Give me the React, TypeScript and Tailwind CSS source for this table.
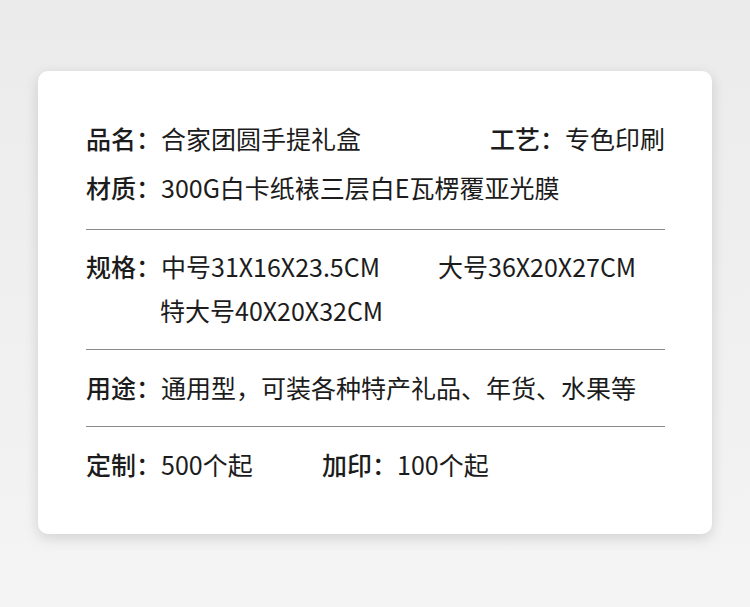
import React from "react";

const Row = ({ children, className = "" }: { children: React.ReactNode; className?: string }) => (
  <div className={`flex h-[44px] items-center whitespace-nowrap ${className}`}>{children}</div>
);

const Label = ({ children }: { children: React.ReactNode }) => (
  <span className="font-medium">{children}</span>
);

export default function App() {
  return (
    <div className="flex h-[607px] w-[750px] items-start justify-center bg-gradient-to-b from-[#ebebeb] to-[#f4f4f4] pt-[71px] font-['Noto_Sans_CJK_SC',sans-serif]">
      <div className="w-[674px] rounded-[10px] bg-white pb-[47px] pl-[48px] pr-[47px] pt-[46px] text-[25px] text-[#1c1c1c] shadow-[0_4px_14px_rgba(0,0,0,0.14)]">
        <Row>
          <Label>品名：</Label>
          <span className="w-[333px]">合家团圆手提礼盒</span>
          <Label>工艺：</Label>
          <span>专色印刷</span>
        </Row>
        <Row className="mt-[5px]">
          <Label>材质：</Label>
          <span>300G白卡纸裱三层白E瓦楞覆亚光膜</span>
        </Row>
        <div className="mt-[19px] h-px bg-[#8a8a8a]" />

        <Row className="mt-[15px]">
          <Label>规格：</Label>
          <span className="w-[277px]">中号31X16X23.5CM</span>
          <span>大号36X20X27CM</span>
        </Row>
        <Row>
          <span className="pl-[74px]">特大号40X20X32CM</span>
        </Row>
        <div className="mt-[16px] h-px bg-[#8a8a8a]" />

        <Row className="mt-[16px]">
          <Label>用途：</Label>
          <span>通用型，可装各种特产礼品、年货、水果等</span>
        </Row>
        <div className="mt-[16px] h-px bg-[#8a8a8a]" />

        <Row className="mt-[16px]">
          <Label>定制：</Label>
          <span className="w-[161px]">500个起</span>
          <Label>加印：</Label>
          <span>100个起</span>
        </Row>
      </div>
    </div>
  );
}
